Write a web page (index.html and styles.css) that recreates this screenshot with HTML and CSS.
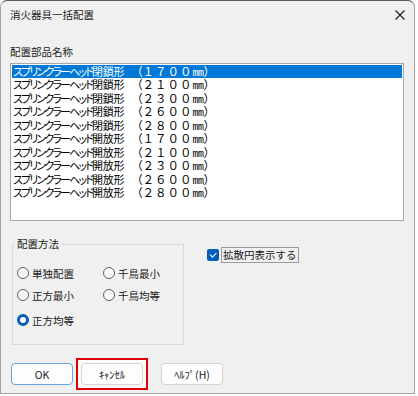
FILE: index.html
```html
<!DOCTYPE html>
<html lang="ja">
<head>
    <meta charset="UTF-8">
    <title>消火器具一括配置</title>
    <link rel="stylesheet" href="styles.css">
</head>
<body>
  <div class="window">
    <div class="titlebar">
      <span class="title">消火器具一括配置</span>
      <svg class="close" width="10" height="10" viewBox="0 0 10 10">
        <path d="M0.5 0.5 L9.5 9.5 M9.5 0.5 L0.5 9.5" stroke="#1a1a1a" stroke-width="1.1"/>
      </svg>
    </div>

    <div class="content">
      <div class="list-label">配置部品名称</div>

      <!-- parts list -->
      <div class="listbox">
        <div class="item selected"><span class="name"><span class="kana">スプリンクラーヘッド</span>閉鎖形</span><span class="size">　<span class="paren">（</span>１７００<span class="unit">mm</span><span class="paren">）</span></span></div>
        <div class="item"><span class="name"><span class="kana">スプリンクラーヘッド</span>閉鎖形</span><span class="size">　<span class="paren">（</span>２１００<span class="unit">mm</span><span class="paren">）</span></span></div>
        <div class="item"><span class="name"><span class="kana">スプリンクラーヘッド</span>閉鎖形</span><span class="size">　<span class="paren">（</span>２３００<span class="unit">mm</span><span class="paren">）</span></span></div>
        <div class="item"><span class="name"><span class="kana">スプリンクラーヘッド</span>閉鎖形</span><span class="size">　<span class="paren">（</span>２６００<span class="unit">mm</span><span class="paren">）</span></span></div>
        <div class="item"><span class="name"><span class="kana">スプリンクラーヘッド</span>閉鎖形</span><span class="size">　<span class="paren">（</span>２８００<span class="unit">mm</span><span class="paren">）</span></span></div>
        <div class="item"><span class="name"><span class="kana">スプリンクラーヘッド</span>開放形</span><span class="size">　<span class="paren">（</span>１７００<span class="unit">mm</span><span class="paren">）</span></span></div>
        <div class="item"><span class="name"><span class="kana">スプリンクラーヘッド</span>開放形</span><span class="size">　<span class="paren">（</span>２１００<span class="unit">mm</span><span class="paren">）</span></span></div>
        <div class="item"><span class="name"><span class="kana">スプリンクラーヘッド</span>開放形</span><span class="size">　<span class="paren">（</span>２３００<span class="unit">mm</span><span class="paren">）</span></span></div>
        <div class="item"><span class="name"><span class="kana">スプリンクラーヘッド</span>開放形</span><span class="size">　<span class="paren">（</span>２６００<span class="unit">mm</span><span class="paren">）</span></span></div>
        <div class="item"><span class="name"><span class="kana">スプリンクラーヘッド</span>開放形</span><span class="size">　<span class="paren">（</span>２８００<span class="unit">mm</span><span class="paren">）</span></span></div>
      </div>

      <div class="options">
        <fieldset class="group">
          <legend>配置方法</legend>
          <div class="radios">
            <label class="radio"><input type="radio" name="method">単独配置</label>
            <label class="radio"><input type="radio" name="method">千鳥最小</label>
            <label class="radio"><input type="radio" name="method">正方最小</label>
            <label class="radio"><input type="radio" name="method">千鳥均等</label>
            <label class="radio"><input type="radio" name="method" checked>正方均等</label>
          </div>
        </fieldset>

        <label class="check">
          <input type="checkbox" checked>
          <span class="focus">拡散円表示する</span>
        </label>
      </div>

      <div class="buttons">
        <button class="btn default">OK</button>
        <span class="mark"><button class="btn">ｷｬﾝｾﾙ</button></span>
        <button class="btn">ﾍﾙﾌﾟ(H)</button>
      </div>
    </div>
  </div>
</body>
</html>
```

FILE: styles.css
```css
* {
    box-sizing: border-box;
}
body {
    margin: 0;
    background-color: #ffffff;
    font-family: "Noto Sans CJK JP", "Noto Sans", sans-serif;
    font-size: 10.5px;
    color: #1b1b1b;
}
.window {
    width: 415px;
    height: 394px;
    background-color: #f0f0f0;
    border: 1px solid #a3a3a3;
    border-top-color: #5a5a5a;
    border-radius: 7px 7px 0 0;
}
.titlebar {
    height: 28px;
    display: flex;
    align-items: center;
    justify-content: space-between;
    padding: 0 9px 0 9px;
}
.title {
    line-height: 14px;
}
.content {
    padding: 0 10px 0 9px;
}
.list-label {
    margin-top: 16px;
    line-height: 14px;
}
.listbox {
    margin-top: 4px;
    width: 394px;
    height: 158px;
    background: white;
    border: 1px solid #a7a7a7;
    padding: 1px;
    font-size: 11.5px;
    color: #000;
}
.item {
    height: 13.45px;
    line-height: 13.45px;
    padding-left: 1px;
    white-space: nowrap;
}
.name {
    font-size: 11px;
    font-feature-settings: "palt";
    letter-spacing: -0.3px;
}
.kana {
    letter-spacing: -1.85px;
}
.size {
    letter-spacing: 1px;
}
.paren {
    font-feature-settings: "palt";
    letter-spacing: 0;
}
.unit {
    font-family: "Liberation Mono", monospace;
    font-size: 10px;
    letter-spacing: -0.3px;
}
.item.selected {
    background-color: #0078d7;
    color: white;
}
.options {
    display: flex;
    align-items: flex-start;
    margin-top: 16px;
}
.group {
    margin: 0 0 0 2px;
    width: 172px;
    height: 108px;
    border: 1px solid #dadada;
    padding: 0 0 0 2px;
}
.group legend {
    padding: 0 2px;
    line-height: 14px;
}
.radios {
    display: grid;
    grid-template-columns: 86px auto;
    grid-template-rows: 22px 25px 16px;
    margin-top: 14px;
    margin-left: 2px;
}
.radio {
    display: flex;
    align-items: center;
    gap: 3px;
    height: 16px;
}
.radio input {
    appearance: none;
    margin: 0;
    width: 12px;
    height: 12px;
    border: 1px solid #606060;
    border-radius: 50%;
    background: #f8f8f8;
}
.radio input:checked {
    border: 3.5px solid #005fb8;
    background: white;
}
.check {
    display: flex;
    align-items: center;
    gap: 2px;
    margin: 10px 0 0 23px;
}
.check input {
    appearance: none;
    margin: 0;
    width: 12px;
    height: 12px;
    border-radius: 2px;
    background: #005fb8;
    display: grid;
    place-items: center;
}
.check input::after {
    content: "";
    width: 5px;
    height: 2.5px;
    border-left: 1px solid white;
    border-bottom: 1px solid white;
    transform: rotate(-45deg) translate(0.5px, -0.5px);
}
.focus {
    border: 1px solid #9a9a9a;
    padding: 0 1px;
    line-height: 14px;
}
.buttons {
    display: flex;
    align-items: center;
    margin-top: 13px;
    padding-left: 1px;
}
.btn {
    width: 62px;
    height: 22px;
    padding: 0;
    background: #fdfdfd;
    border: 1px solid #d3d3d3;
    border-radius: 4px;
    font-family: inherit;
    font-size: 10.5px;
    color: #1b1b1b;
}
.btn.default {
    border-color: #6aa4dc;
}
.mark {
    margin-left: 3px;
    margin-right: 13px;
    padding: 3px;
    border: 2px solid #e00000;
    background: #fbfbfb;
    display: flex;
}
```
